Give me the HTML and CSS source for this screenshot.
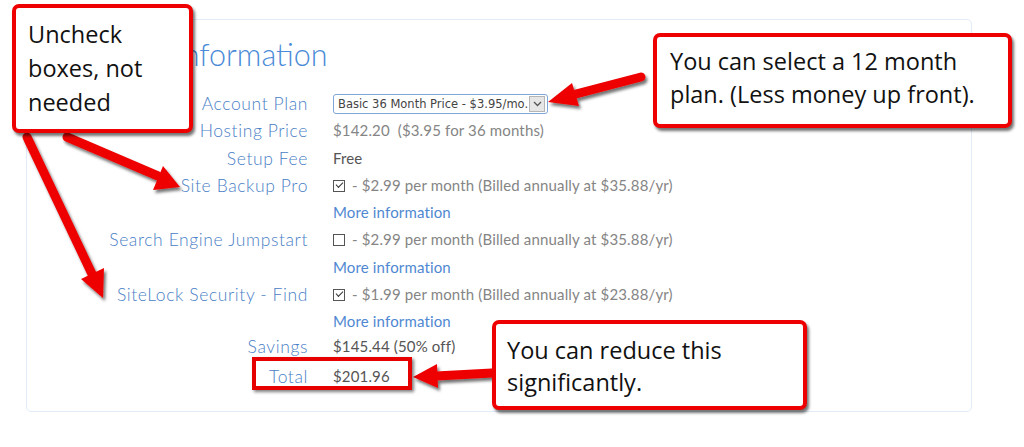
FILE: index.html
```html
<!DOCTYPE html>
<html lang="en">

<head>
    <meta charset="UTF-8">
    <title>Information</title>
    <link rel="stylesheet" href="styles.css">
</head>

<body>

    <div class="card">
        <h1 class="title">Information</h1>

        <div class="details">
            <div class="label">Account Plan</div>
            <div class="value">
                <div class="select">
                    <span class="select-text">Basic 36 Month Price - $3.95/mo.</span>
                    <span class="select-btn">
                        <svg width="9" height="6" viewBox="0 0 9 6"><path d="M1 1 L4.5 4.5 L8 1" fill="none" stroke="#555" stroke-width="1.3"/></svg>
                    </span>
                </div>
            </div>

            <div class="label">Hosting Price</div>
            <div class="value">$142.20 &nbsp;($3.95 for 36 months)</div>

            <div class="label">Setup Fee</div>
            <div class="value dark">Free</div>

            <div class="label">Site Backup Pro</div>
            <div class="value"><span class="box checked"></span> - $2.99 per month (Billed annually at $35.88/yr)</div>
            <div></div>
            <div class="value"><a class="more" href="#">More information</a></div>

            <div class="label">Search Engine Jumpstart</div>
            <div class="value"><span class="box"></span> - $2.99 per month (Billed annually at $35.88/yr)</div>
            <div></div>
            <div class="value"><a class="more" href="#">More information</a></div>

            <div class="label">SiteLock Security - Find</div>
            <div class="value"><span class="box checked"></span> - $1.99 per month (Billed annually at $23.88/yr)</div>
            <div></div>
            <div class="value"><a class="more" href="#">More information</a></div>

            <div class="label savings">Savings</div>
            <div class="value dark savings">$145.44 (50% off)</div>

            <div class="label total">Total</div>
            <div class="value dark total">$201.96</div>
        </div>
    </div>

    <!-- annotations on top of the screenshot -->
    <svg class="arrows" width="1024" height="447" viewBox="0 0 1024 447">
        <defs>
            <filter id="shadow" x="-20%" y="-20%" width="140%" height="140%">
                <feDropShadow dx="2" dy="3" stdDeviation="1.5" flood-color="#000" flood-opacity="0.55"/>
            </filter>
        </defs>
        <g fill="#ee0000" stroke="#ee0000" stroke-linecap="round" filter="url(#shadow)">
            <!-- to the plan dropdown -->
            <line x1="641" y1="77" x2="572" y2="95" stroke-width="9"/>
            <polygon points="548,102 572,83 579,106" stroke="none"/>
            <!-- to site backup -->
            <line x1="67" y1="137" x2="158" y2="176" stroke-width="9"/>
            <polygon points="180,187 153,190 163,166" stroke="none"/>
            <!-- to sitelock -->
            <line x1="27" y1="137" x2="92" y2="274" stroke-width="9"/>
            <polygon points="103,298 81,279 104,268" stroke="none"/>
            <!-- to total -->
            <line x1="492" y1="373" x2="436" y2="376" stroke-width="9"/>
            <polygon points="413,377 437,364 438,388" stroke="none"/>
        </g>
    </svg>

    <div class="total-mark"></div>

    <div class="note note-uncheck">Uncheck<br>boxes, not<br>needed</div>
    <div class="note note-plan">You can select a 12 month<br>plan. (Less money up front).</div>
    <div class="note note-total">You can reduce this<br>significantly.</div>

</body>

</html>
```

FILE: styles.css
```css
body {
    margin: 0;
    background: #ffffff;
    font-family: Lato, "Open Sans", sans-serif;
    position: relative;
    width: 1024px;
    height: 447px;
    overflow: hidden;
}

.card {
    margin: 19px 0 0 26px;
    width: 944px;
    height: 391px;
    border: 1px solid #e1ecf8;
    border-radius: 5px;
}

.title {
    margin: 17px 0 0 148px;
    font-size: 30.5px;
    font-weight: 300;
    color: #4a8ad8;
    line-height: 34px;
}

.details {
    display: grid;
    grid-template-columns: 281px 1fr;
    column-gap: 25px;
    margin-top: 19px;
    line-height: 27.3px;
}

.label {
    text-align: right;
    color: #4a80c6;
    font-size: 17.5px;
    font-weight: 300;
    letter-spacing: 0.6px;
}

.value {
    color: #858585;
    display: flex;
    align-items: center;
    white-space: pre;
    font-size: 15px;
    letter-spacing: 0.15px;
}

.value.dark {
    color: #555555;
}

.details .savings {
    margin-top: -3px;
}

.details .total {
    margin-top: 3px;
}

.more {
    color: #4f88d2;
    text-decoration: none;
}

.select {
    display: flex;
    align-items: center;
    width: 213px;
    height: 18px;
    border: 1px solid #7ea6d8;
    border-radius: 3px;
    font-family: "DejaVu Sans", sans-serif;
    font-size: 11.5px;
    letter-spacing: 0;
    color: #444;
    line-height: 18px;
    overflow: hidden;
}

.select-text {
    flex: 1;
    padding-left: 4px;
}

.select-btn {
    display: flex;
    align-items: center;
    justify-content: center;
    width: 14px;
    height: 14px;
    margin-right: 2px;
    background: #e6e6e6;
    border: 1px solid #b5b5b5;
}

.box {
    display: inline-block;
    width: 10px;
    height: 10px;
    border: 1px solid #555;
    margin-right: 3px;
    position: relative;
}

.box.checked::after {
    content: "";
    position: absolute;
    left: 2px;
    top: 1px;
    width: 6px;
    height: 3px;
    border-left: 1.5px solid #333;
    border-bottom: 1.5px solid #333;
    transform: rotate(-45deg);
}

.arrows {
    position: absolute;
    left: 0;
    top: 0;
}

.total-mark {
    position: absolute;
    left: 252px;
    top: 357px;
    width: 152px;
    height: 25px;
    border: 4px solid #e60000;
    box-shadow: 2px 2px 3px rgba(0, 0, 0, 0.5);
}

.note {
    position: absolute;
    box-sizing: border-box;
    background: #ffffff;
    border: 4px solid #ee0000;
    border-radius: 7px;
    box-shadow: 2px 3px 3px rgba(0, 0, 0, 0.55);
    font-family: "Open Sans", sans-serif;
    font-size: 23.5px;
    line-height: 34px;
    color: #111;
    white-space: nowrap;
}

.note-uncheck {
    left: 12px;
    top: 4px;
    width: 181px;
    height: 129px;
    padding: 9px 6px 0 12px;
}

.note-plan {
    left: 653px;
    top: 33px;
    width: 359px;
    height: 95px;
    padding: 8px 6px 0 13px;
    line-height: 33px;
}

.note-total {
    left: 492px;
    top: 320px;
    width: 315px;
    height: 90px;
    padding: 10px 6px 0 11px;
    line-height: 32px;
}
```
